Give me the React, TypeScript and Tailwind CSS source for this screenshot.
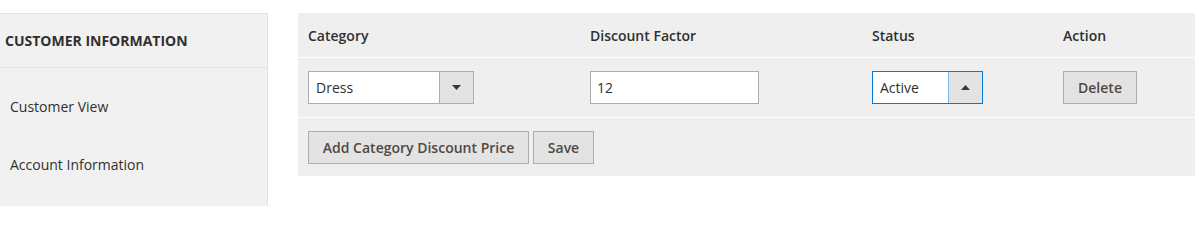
const font = { fontFamily: '"Open Sans", "Noto Sans", sans-serif' };

const Arrow = ({ up }: { up?: boolean }) => (
  <svg width="9" height="5" viewBox="0 0 9 5" className="fill-[#41362f]">
    {up ? <path d="M0 5 L4.5 0 L9 5 Z" /> : <path d="M0 0 L9 0 L4.5 5 Z" />}
  </svg>
);

const Button = ({ children, className = "" }: { children: React.ReactNode; className?: string }) => (
  <button
    className={`h-[33px] border border-[#adadad] bg-[#e3e3e3] text-[14px] font-semibold text-[#514943] ${className}`}
  >
    {children}
  </button>
);

export default function App() {
  return (
    <div className="flex h-[206px] bg-white pt-[13px] text-[#303030]" style={font}>
      {/* Sidebar */}
      <div className="w-[268px] shrink-0 border-t border-r border-[#e3e3e3] bg-[#f1f1f1]">
        <div className="flex h-[54px] items-center border-b border-[#e3e3e3] pl-[5px] text-[14px] font-bold uppercase">
          Customer Information
        </div>
        <div className="pt-[9px] text-[14px]">
          <div className="flex h-[58px] items-center pl-[10px]">Customer View</div>
          <div className="flex h-[58px] items-center pl-[10px]">Account Information</div>
        </div>
      </div>

      {/* Discount table */}
      <div className="ml-[30px] w-[897px] self-start bg-[#efefef] text-[14px]">
        <div className="grid h-[45px] grid-cols-[282px_282px_191px_142px] items-center border-b border-white font-semibold">
          <div className="pl-[10px]">Category</div>
          <div className="pl-[10px]">Discount Factor</div>
          <div className="pl-[10px]">Status</div>
          <div className="pl-[10px]">Action</div>
        </div>
        <div className="grid grid-cols-[282px_282px_191px_142px] items-center border-b border-white py-[13px]">
          <div className="pl-[10px]">
            <div className="flex h-[33px] w-[166px] border border-[#adadad] bg-white">
              <span className="flex flex-1 items-center pl-[7px]">Dress</span>
              <span className="flex w-[34px] items-center justify-center border-l border-[#adadad] bg-[#e3e3e3]">
                <Arrow />
              </span>
            </div>
          </div>
          <div className="pl-[10px]">
            <div className="flex h-[33px] w-[169px] items-center border border-[#adadad] bg-white pl-[6px]">12</div>
          </div>
          <div className="pl-[10px]">
            <div className="flex h-[33px] w-[111px] border border-[#007bdb] bg-white">
              <span className="flex flex-1 items-center pl-[7px]">Active</span>
              <span className="flex w-[34px] items-center justify-center border-l border-[#7ab8ea] bg-[#e3e3e3]">
                <Arrow up />
              </span>
            </div>
          </div>
          <div className="pl-[10px]">
            <Button className="w-[74px]">Delete</Button>
          </div>
        </div>
        <div className="flex gap-[4px] px-[10px] pt-[13px] pb-[12px]">
          <Button className="w-[221px]">Add Category Discount Price</Button>
          <Button className="w-[61px]">Save</Button>
        </div>
      </div>
    </div>
  );
}
